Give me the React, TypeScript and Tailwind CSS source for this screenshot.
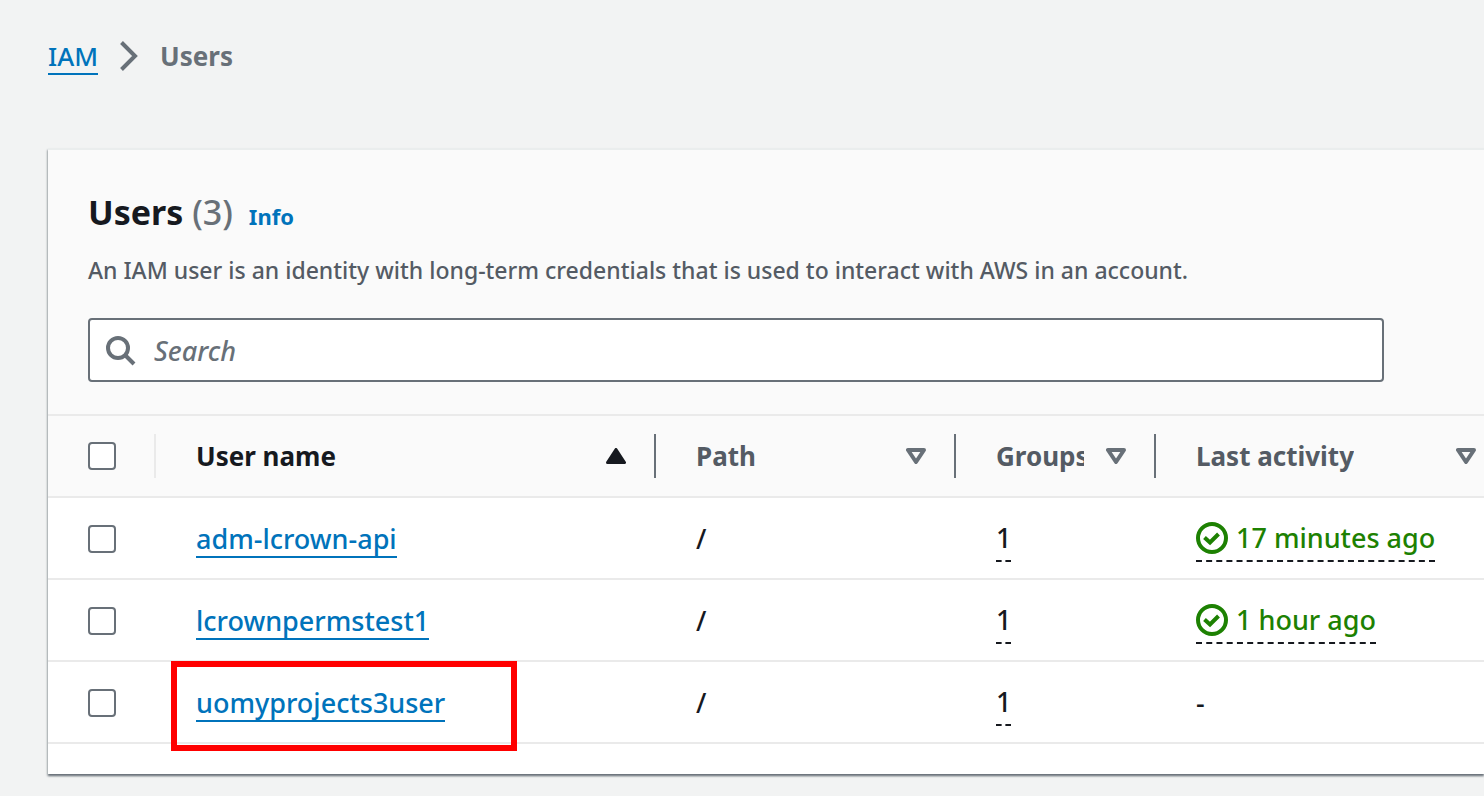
import type { ReactNode } from 'react';

type User = { name: string; path: string; groups: number; activity: string | null; marked?: boolean };

const users: User[] = [
  { name: 'adm-lcrown-api', path: '/', groups: 1, activity: '17 minutes ago' },
  { name: 'lcrownpermstest1', path: '/', groups: 1, activity: '1 hour ago' },
  { name: 'uomyprojects3user', path: '/', groups: 1, activity: null, marked: true },
];

function SortIcon({ active = false }: { active?: boolean }) {
  return active ? (
    <svg viewBox="0 0 20 16" className="h-4 w-5 shrink-0" aria-hidden="true">
      <path d="M10 1.5 18.5 14.5H1.5Z" fill="#16191f" stroke="#16191f" strokeWidth="3" strokeLinejoin="round" />
    </svg>
  ) : (
    <svg viewBox="0 0 20 16" className="h-4 w-5 shrink-0" aria-hidden="true">
      <path d="M2 2H18L10 14Z" fill="none" stroke="#687078" strokeWidth="4" strokeLinejoin="round" />
    </svg>
  );
}

function CheckCircle() {
  return (
    <svg viewBox="0 0 32 32" className="size-8 shrink-0" fill="none" stroke="#1d8102" strokeWidth="4" aria-hidden="true">
      <circle cx="16" cy="16" r="14" />
      <path d="M8.5 15.5 14 20.5 22.5 12" />
    </svg>
  );
}

function Checkbox({ label }: { label: string }) {
  return (
    <input
      type="checkbox"
      aria-label={label}
      className="block size-7 appearance-none rounded-[4px] border-2 border-[#687078] bg-white checked:bg-[#0073bb]"
    />
  );
}

function HeaderCell({ label, active = false, last = false }: { label: string; active?: boolean; last?: boolean }) {
  return (
    <th scope="col" className="h-[82px] border-b-2 border-[#eaeaea] p-0 text-left">
      <div className={`flex h-11 items-center ${last ? 'pr-2' : 'border-r-2 border-[#687078] pr-7'} pl-10`}>
        <button
          type="button"
          className={`flex w-full min-w-0 items-center justify-between gap-[22px] text-[26px] font-bold ${active ? 'text-[#16191f]' : 'text-[#545b64]'}`}
        >
          <span className="overflow-hidden whitespace-nowrap">{label}</span>
          <SortIcon active={active} />
        </button>
      </div>
    </th>
  );
}

function Cell({ children }: { children: ReactNode }) {
  return <td className="h-[82px] border-b-2 border-[#eaeaea] pt-0.5 pr-0 pb-0 pl-10">{children}</td>;
}

export default function App() {
  return (
    <div className="min-h-screen overflow-hidden bg-[#f2f3f3] pl-12 font-['Noto_Sans','Open_Sans',sans-serif] text-[27px] leading-9 font-medium text-[#16191f]">
      <nav aria-label="Breadcrumb" className="pt-[37px]">
        <ol className="flex h-[38px] items-center">
          <li>
            <a href="#iam" className="block border-b-2 border-[#0073bb] pt-0.5 text-[26px] leading-[34px] text-[#0073bb]">IAM</a>
          </li>
          <li aria-hidden="true" className="px-[21px]">
            <svg viewBox="0 0 20 32" className="h-8 w-5" fill="none" stroke="#687078" strokeWidth="4">
              <path d="M2.5 2.5 16 16 2.5 29.5" />
            </svg>
          </li>
          <li className="text-[26px] font-bold text-[#687078]" aria-current="page">Users</li>
        </ol>
      </nav>

      <main className="mt-[73px] border-t-2 border-[#eaeded] bg-white shadow-[0_2px_2px_0_#687078,-1px_2px_2px_0_rgba(0,28,36,0.15)]">
        <header className="bg-[#fafafa] px-10 pt-[37px] pb-8">
          <div className="flex items-baseline">
            <h1 className="text-[34px] leading-[50px] font-bold">
              Users <span className="font-medium text-[#687078]">(3)</span>
            </h1>
            <a href="#info" className="ml-4 text-[22px] font-bold text-[#0073bb]">Info</a>
          </div>
          <p className="mt-[17px] text-[23px] leading-8 whitespace-nowrap text-[#545b64]">
            An IAM user is an identity with long-term credentials that is used to interact with AWS in an account.
          </p>
          <label className="mt-8 mr-[60px] flex h-16 items-center rounded-[4px] border-2 border-[#687078] bg-white pt-0.5 pl-4">
            <svg viewBox="0 0 30 30" className="size-[30px] shrink-0" fill="none" stroke="#687078" strokeWidth="4" aria-hidden="true">
              <circle cx="12" cy="12" r="10" />
              <path d="M19 19 28 28" />
            </svg>
            <input
              type="text"
              aria-label="Search"
              placeholder="Search"
              className="ml-[18px] min-w-0 flex-1 bg-transparent outline-none placeholder:text-[#687078] placeholder:italic"
            />
          </label>
        </header>

        <table className="w-full table-fixed border-separate border-spacing-0 border-t-2 border-[#eaeaea]">
          <colgroup>
            <col className="w-[108px]" />
            <col className="w-[500px]" />
            <col className="w-[300px]" />
            <col className="w-[200px]" />
            <col />
          </colgroup>
          <thead className="bg-[#fafafa]">
            <tr>
              <th scope="col" className="h-[82px] border-b-2 border-[#eaeaea] p-0">
                <div className="flex h-11 items-center border-r-2 border-[#eaeaea] pl-10">
                  <Checkbox label="Select all users" />
                </div>
              </th>
              <HeaderCell label="User name" active />
              <HeaderCell label="Path" />
              <HeaderCell label="Groups" />
              <HeaderCell label="Last activity" last />
            </tr>
          </thead>
          <tbody>
            {users.map((user) => (
              <tr key={user.name}>
                <Cell>
                  <Checkbox label={`Select ${user.name}`} />
                </Cell>
                <Cell>
                  <div className="relative flex">
                    <a href={`#${user.name}`} className="border-b-2 border-[#0073bb] pt-0.5 leading-[34px] text-[#0073bb]">
                      {user.name}
                    </a>
                    {user.marked && (
                      <span className="pointer-events-none absolute -top-[23px] -left-[25px] h-[90px] w-[346px] border-6 border-[#ff0000]" />
                    )}
                  </div>
                </Cell>
                <Cell>{user.path}</Cell>
                <Cell>
                  <div className="flex">
                    <span className="border-b-2 border-dashed border-[#16191f] leading-[44px]">{user.groups}</span>
                  </div>
                </Cell>
                <Cell>
                  {user.activity ? (
                    <div className="flex">
                      <span className="flex items-center gap-2 border-b-2 border-dashed border-[#16191f] leading-[44px] whitespace-nowrap text-[#1d8102]">
                        <CheckCircle />
                        {user.activity}
                      </span>
                    </div>
                  ) : (
                    '-'
                  )}
                </Cell>
              </tr>
            ))}
          </tbody>
        </table>
        <div className="h-[30px]" />
      </main>
    </div>
  );
}
